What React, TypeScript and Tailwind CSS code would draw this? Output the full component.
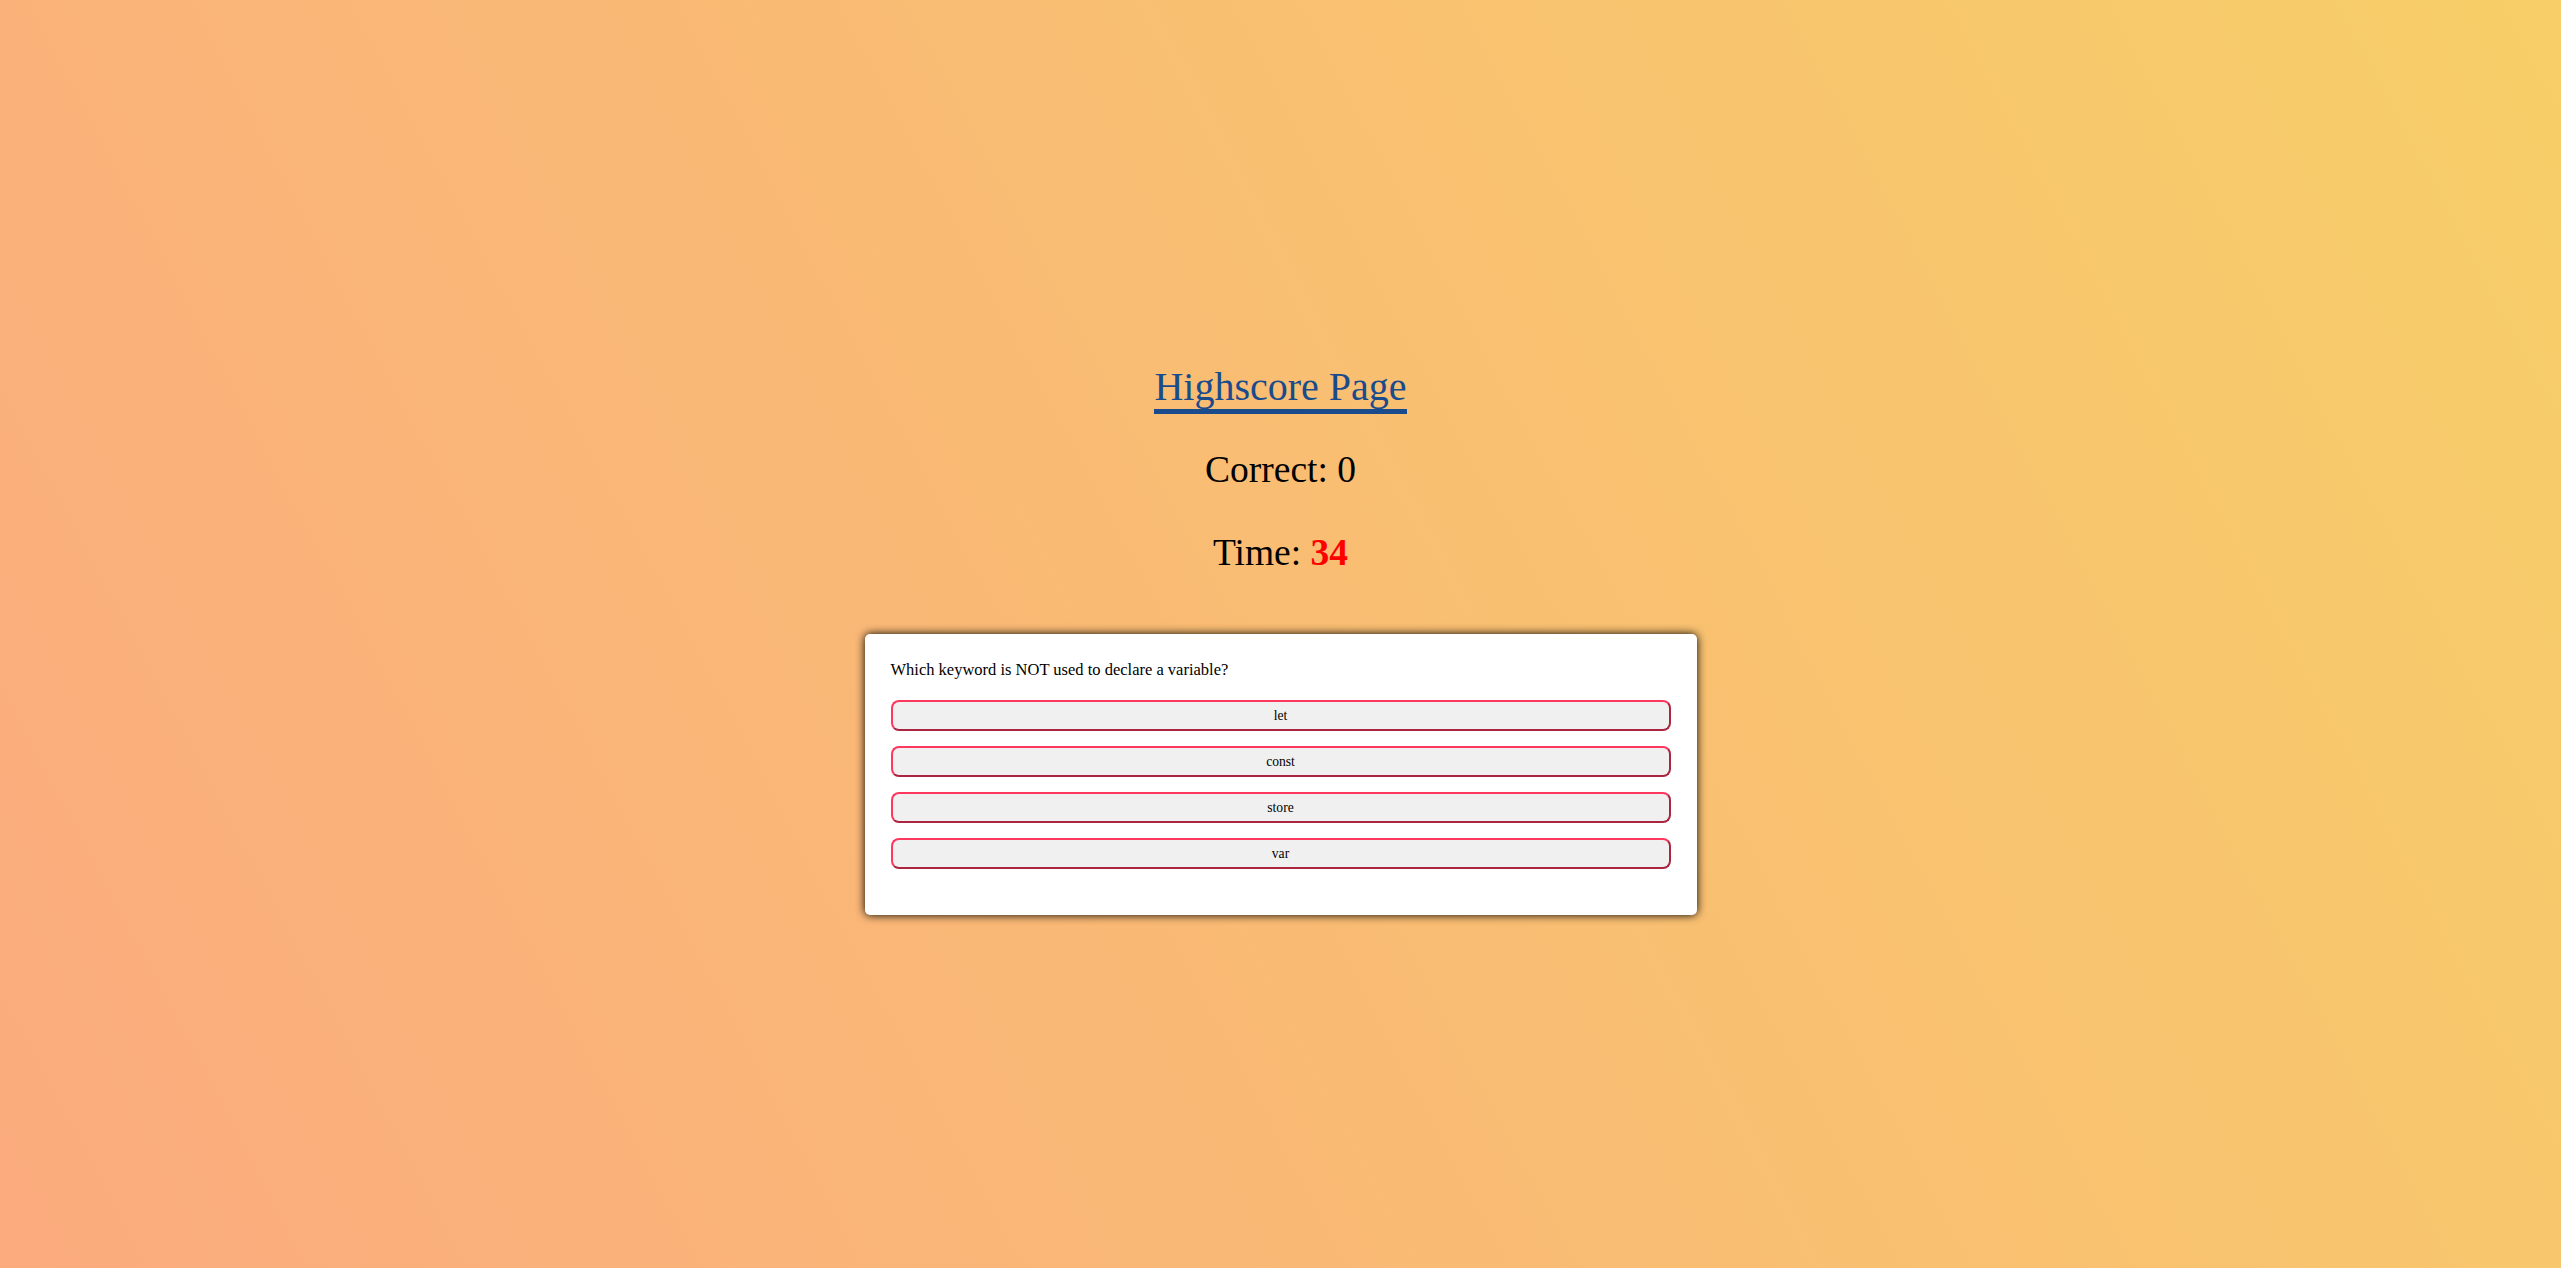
import React from 'react';

const answers = ['let', 'const', 'store', 'var'];

export default function App() {
  return (
    <div className="min-h-screen w-full bg-[#fbab7e] bg-[linear-gradient(62deg,#fbab7e_0%,#f7ce68_100%)] font-['Liberation_Serif','Times_New_Roman',serif] text-black">
      <div className="flex flex-col items-center pt-[364px]">
        {/* Header */}
        <div className="text-[40px] leading-[46px]">
          <a href="#" className="text-[#1a4b8c] border-b-[5px] border-[#1a4b8c] no-underline">
            Highscore Page
          </a>
        </div>
        <p className="mt-[38px] text-[37.5px] leading-[43px]">Correct: 0</p>
        <p className="mt-[40px] text-[37.5px] leading-[43px]">
          Time: <span className="font-bold text-[#ff0000]">34</span>
        </p>

        {/* Question card */}
        <section className="mt-[60px] w-[832px] bg-white rounded-[5px] shadow-[0_0_10px_#000] px-[26px] pt-[27px] pb-[46px]">
          <p className="text-[16.5px] leading-[18px]">Which keyword is NOT used to declare a variable?</p>
          <div className="mt-[21px] flex flex-col gap-[15px]">
            {answers.map((a) => (
              <button
                key={a}
                className="h-[31px] w-full rounded-[8px] border-2 border-solid border-t-[#ff3860] border-l-[#ff3860] border-r-[#ab2540] border-b-[#ab2540] bg-[#f0f0f0] text-[13.6px] leading-none text-black"
              >
                {a}
              </button>
            ))}
          </div>
        </section>
      </div>
    </div>
  );
}
